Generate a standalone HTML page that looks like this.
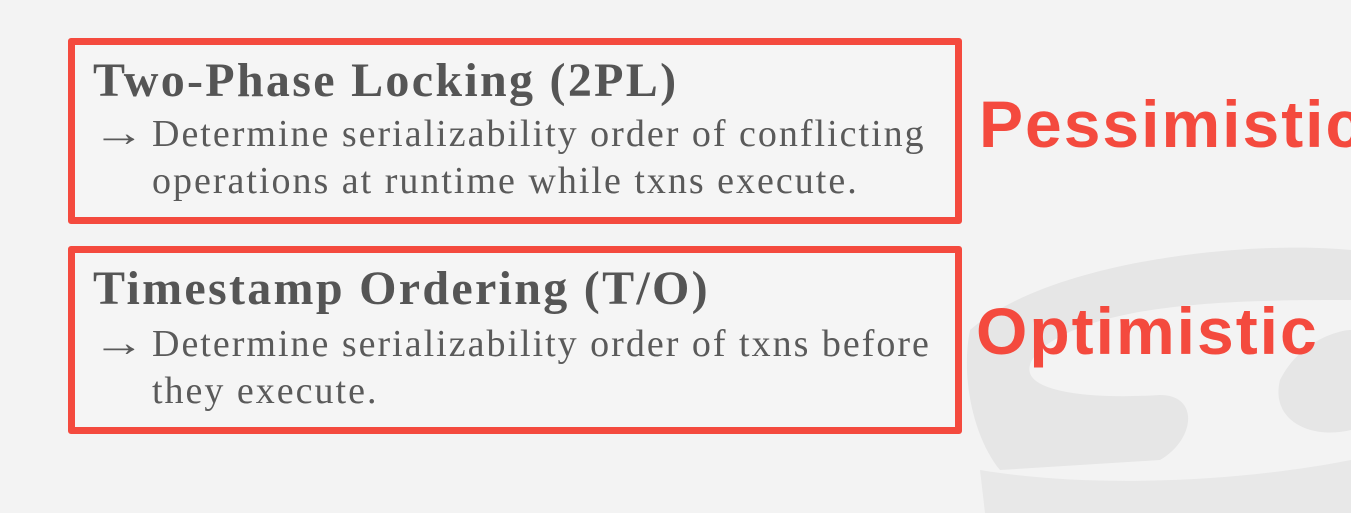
<!DOCTYPE html>
<html><head><style>
html,body{margin:0;padding:0;}
body{width:1351px;height:513px;background:#f3f3f3;position:relative;overflow:hidden;font-family:"Liberation Serif",serif;}
.box{position:absolute;left:68px;width:880px;border:7px solid #f44a3e;border-radius:3px;background:#f5f5f5;}
.t{position:absolute;left:18px;font-weight:bold;font-size:48px;color:#555;letter-spacing:2.3px;white-space:nowrap;line-height:60px;}
.l{position:absolute;left:18px;font-size:38px;color:#5a5a5a;letter-spacing:2px;white-space:nowrap;line-height:48px;}
.l span{display:inline-block;width:59px;letter-spacing:0;font-size:40px;transform:scaleX(1.3);transform-origin:left;}
.r{position:absolute;font-family:"Liberation Sans",sans-serif;font-weight:bold;color:#f44a3e;font-size:66px;letter-spacing:2px;white-space:nowrap;}
</style></head><body>
<svg width="1351" height="513" style="position:absolute;left:0;top:0">
<path d="M970 330 C1050 260 1250 240 1351 250 L1351 300 C1250 300 1100 300 1040 350 C1000 390 1080 400 1160 395 C1200 395 1195 440 1160 460 L1000 470 C975 440 960 380 970 330Z" fill="#e6e6e6"/>
<path d="M1280 380 C1300 340 1340 330 1351 330 L1351 430 C1310 440 1270 420 1280 380Z" fill="#e6e6e6"/>
<path d="M980 470 C1100 490 1250 480 1351 460 L1351 513 L985 513Z" fill="#e8e8e8"/>
</svg>
<div class="box" style="top:38px;height:172px;">
<div class="t" style="top:6px;">Two-Phase Locking (2PL)</div>
<div class="l" style="top:64px;"><span>→</span>Determine serializability order of conflicting</div>
<div class="l" style="top:112px;"><span></span>operations at runtime while txns execute.</div>
</div>
<div class="box" style="top:246px;height:174px;">
<div class="t" style="top:6px;">Timestamp Ordering (T/O)</div>
<div class="l" style="top:66px;"><span>→</span>Determine serializability order of txns before</div>
<div class="l" style="top:114px;"><span></span>they execute.</div>
</div>
<div class="r" style="left:979px;top:86px;">Pessimistic</div>
<div class="r" style="left:976px;top:293px;">Optimistic</div>
</body></html>
